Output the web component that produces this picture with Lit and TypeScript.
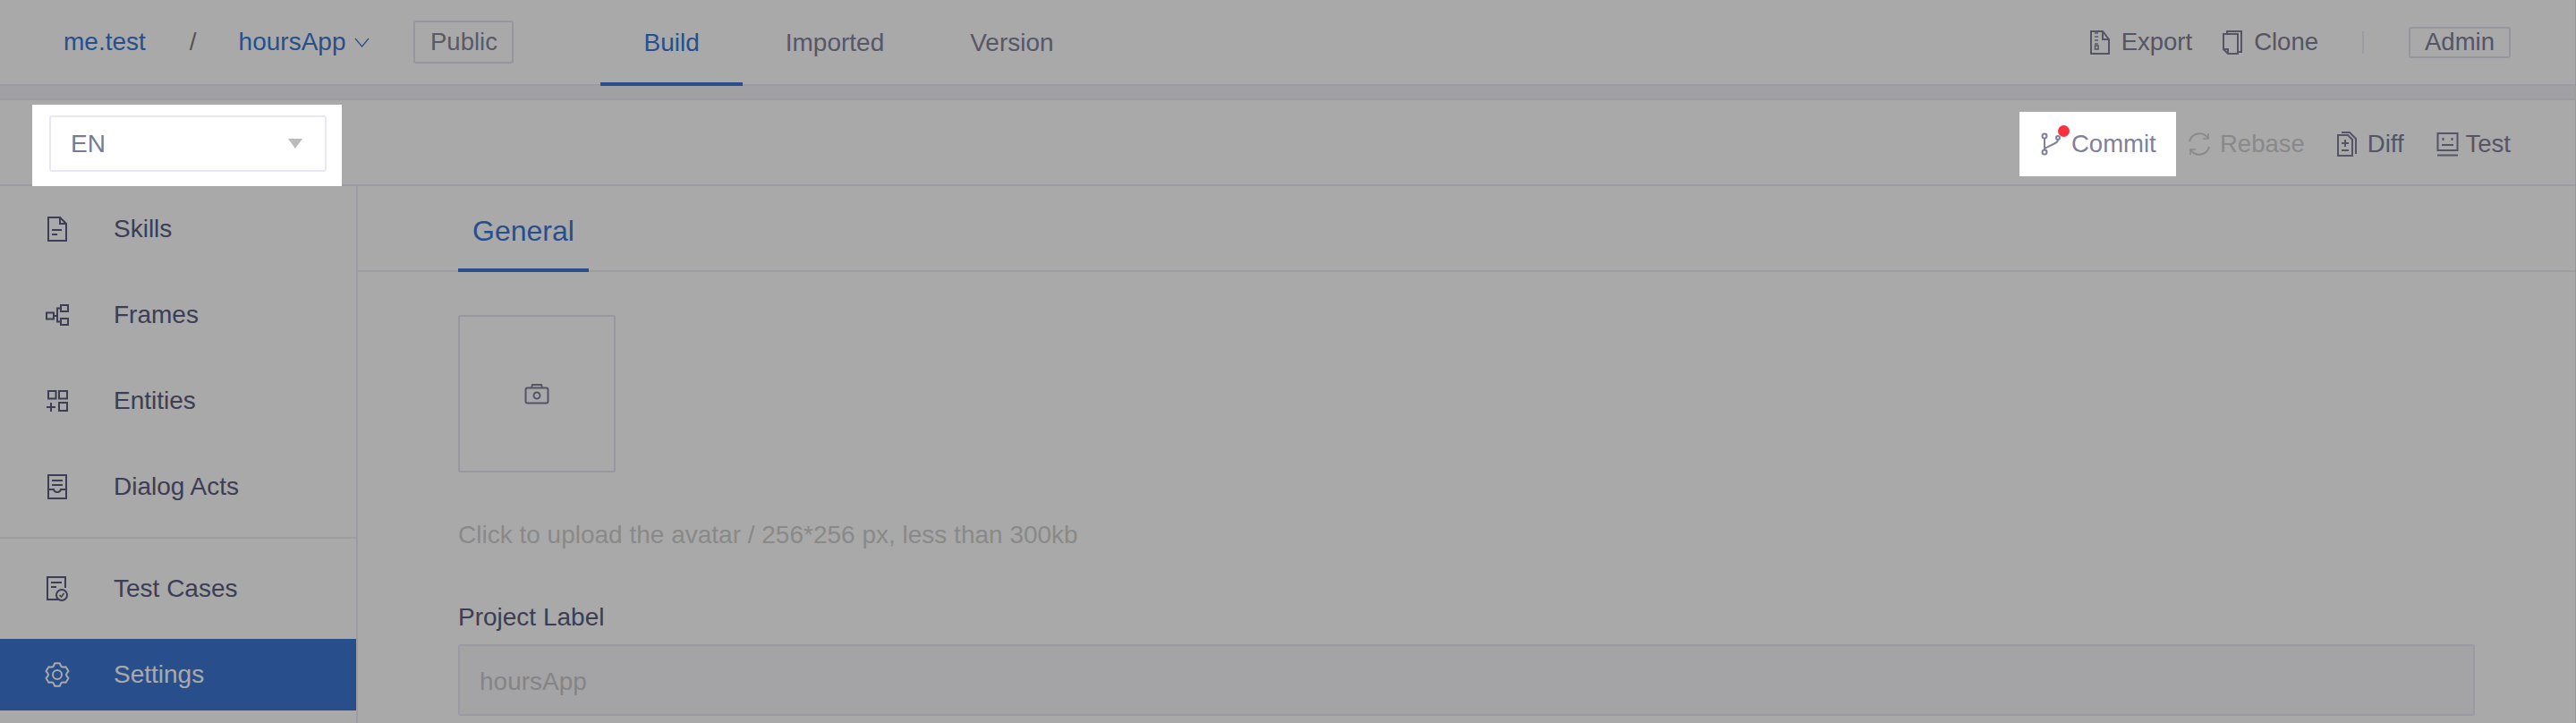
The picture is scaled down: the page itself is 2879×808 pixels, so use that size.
import { LitElement, html, css, svg } from "lit";
import { customElement } from "lit/decorators.js";

const gearPath = (() => {
  const cx = 14, cy = 14, R = 13, r = 10, n = 6;
  const pts: string[] = [];
  for (let i = 0; i < n; i++) {
    const a = (i / n) * Math.PI * 2 - Math.PI / 2;
    const s = Math.PI / n;
    const p = (ang: number, rad: number) => `${(cx + Math.cos(ang) * rad).toFixed(2)} ${(cy + Math.sin(ang) * rad).toFixed(2)}`;
    pts.push(`${i === 0 ? "M" : "L"}${p(a - s * 0.42, R)}`);
    pts.push(`L${p(a + s * 0.42, R)}`);
    pts.push(`Q${p(a + s * 0.75, r + 0.3)} ${p(a + s, r)}`);
    pts.push(`Q${p(a + s * 1.25, r + 0.3)} ${p(a + s * 1.58, R)}`);
  }
  return pts.join(" ") + "Z";
})();

const ic = (w: number, h: number, body: unknown) => html`<svg class="ic" width=${w} height=${h} viewBox="0 0 ${w} ${h}" fill="none" stroke="currentColor" stroke-width="2">${body}</svg>`;

const icons = {
  skills: ic(24, 30, svg`<path d="M2 2h13l7 7v19H2z"/><path d="M15 2v7h7"/><path d="M6 16h11M6 21h6"/>`),
  frames: ic(26, 24, svg`<rect x="1" y="9.500" width="8" height="7"/><rect x="17" y="1" width="8" height="7"/><rect x="17" y="16" width="8" height="7"/><path d="M9 13h4M17 4.500h-4v15h4"/>`),
  entities: ic(26, 26, svg`<rect x="3" y="2" width="8.500" height="8.500"/><rect x="15" y="2" width="9" height="8.500"/><rect x="15" y="15" width="9" height="9"/><path d="M1 20h10M6 15v10"/>`),
  dialog: ic(24, 30, svg`<path d="M2 2h20v26H2z"/><path d="M6 8h12M6 13h12M2 18h6c1 4 7 4 8 0h6"/>`),
  tests: ic(26, 30, svg`<path d="M15 27H2V2h20v12"/><path d="M6 8h12M6 13h6"/><circle cx="18" cy="22" r="6"/><path d="M15.500 22l2 2 3-4" stroke-width="1.500"/>`),
  settings: ic(28, 28, svg`<path d=${gearPath} stroke-linejoin="round"/><circle cx="14" cy="14" r="5"/>`),
  camera: ic(28, 24, svg`<path d="M8 5.500l1-3.500h10l1 3.500"/><rect x="1.500" y="5.500" width="25" height="17" rx="2"/><circle cx="14" cy="14" r="3.500"/>`),
  exportI: ic(24, 28, svg`<path d="M2 2h13l7 9v16H2z"/><path d="M15 2v9h7"/><path d="M8 3v14" stroke-width="4" stroke-dasharray="2 2" opacity=".7"/><rect x="6.500" y="18" width="3.500" height="4" stroke-width="1.500"/>`),
  clone: ic(24, 28, svg`<path d="M6 5V2h16v23h-4"/><path d="M2 5h16v22H7l-5-5z"/><path d="M2 22h5v5"/>`),
  commit: ic(22, 28, svg`<circle cx="4" cy="5" r="2.500"/><circle cx="4" cy="23" r="2.500"/><circle cx="19" cy="7" r="2"/><path d="M4 7.500v13M4 19l12-6c2-1 3-2 3-4"/>`),
  rebase: ic(28, 28, svg`<path d="M3 11A11.500 11.500 0 0 1 24 8M25 17A11.500 11.500 0 0 1 4 20"/><path d="M24 2v6h-6M4 26v-6h6" stroke-width="1.500"/>`),
  diff: ic(24, 30, svg`<path d="M6 2h9l7 7v17"/><path d="M2 5h11l5 5v18H2z"/><path d="M6 14h8M10 10v8M6 22h8"/>`),
  test: ic(26, 30, svg`<rect x="2.500" y="3" width="22" height="19"/><path d="M8.500 8v3M18.500 8v3M7 16h13"/><path d="M2 27.500h23"/>`),
};

@customElement("app-root")
export class AppRoot extends LitElement {
  static styles = css`
    :host {
      display: block;
      position: relative;
      box-sizing: border-box;
      width: 2879px;
      height: 808px;
      overflow: hidden;
      background: #fff;
      border-right: 1px solid #9a9a9a;
      font-family: "Liberation Sans", Arial, sans-serif;
      font-size: 28px;
      color: #80809a;
    }
    * { box-sizing: border-box; }
    .ic { display: block; flex: none; }
    .dim { position: absolute; inset: 0; background: rgba(0, 0, 0, 0.336); z-index: 1; }
    .lift { position: relative; z-index: 2; background: #fff; }

    .top {
      display: flex;
      align-items: center;
      height: 96px;
      padding: 0 72px 0 71px;
      border-bottom: 2px solid #eaeaf4;
    }
    .link { color: #3d78d4; }
    .sep { margin: 0 47px 0 49px; color: #808080; }
    .chev { margin-left: 10px; color: #3d78d4; }
    .public {
      display: flex; align-items: center; justify-content: center;
      width: 112px; height: 48px; margin-left: 49px;
      border: 2px solid #e2e2ee; border-radius: 3px; color: #88889a;
      font-size: 27.5px;
    }
    .tabs { display: flex; align-self: flex-start; margin-left: 97px; }
    .tab {
      display: flex; align-items: center;
      height: 96px; padding: 4px 48px 0;
      border-bottom: 4px solid transparent;
      color: #84849a;
    }
    .tab.on { color: #3d78d4; border-bottom-color: #3d78d4; }
    .top-right { display: flex; align-items: center; margin-left: auto; font-size: 27.5px; }
    .act { display: flex; align-items: center; gap: 12px; color: #80809a; white-space: nowrap; }
    .act + .act { margin-left: 33px; }
    .vline { width: 2px; height: 25px; margin: 0 50px 0 49px; background: #eaeaf4; }
    .admin {
      display: flex; align-items: center; justify-content: center;
      width: 114px; height: 35px;
      border: 2px solid #e2e2ee; border-radius: 3px;
    }
    .band { height: 16px; background: #f3f3f9; border-bottom: 2px solid #eaeaf4; }

    .bar {
      display: flex; align-items: center; justify-content: space-between;
      height: 96px; padding: 4px 72px 0 36px;
      border-bottom: 2px solid #eaeaf4;
    }
    .sel-wrap {
      align-self: flex-end;
      width: 346px; height: 91px;
      margin-bottom: -2px;
      padding: 12px 17px 0 19px;
    }
    .sel {
      display: flex; align-items: center; justify-content: space-between;
      height: 63px; padding: 0 25px 0 22px;
      border: 2px solid #e8e8f5; border-radius: 3px;
      color: #7a7a90;
    }
    .arrow { width: 0; height: 0; border: 8px solid transparent; border-top: 11px solid #bbb; border-bottom: 0; }
    .bar-right { display: flex; align-items: center; font-size: 27.5px; }
    .commit {
      display: flex; align-items: center; gap: 12px;
      width: 175px; height: 72px; padding-left: 24px;
      margin-right: 12px;
    }
    .commit .dot-box { position: relative; }
    .dot { position: absolute; right: -10px; top: -7px; width: 13px; height: 13px; border-radius: 50%; background: #f5333f; }
    .act.off { color: #cfcfcf; gap: 9px; }
    .act.diff { gap: 11px; margin-left: 35px; }
    .act.tst { gap: 8px; margin-left: 35px; }

    .main { display: flex; height: 600px; }
    .side { width: 400px; padding-top: 8px; border-right: 2px solid #eaeaf4; flex: none; }
    .item {
      display: flex; align-items: center;
      height: 80px; margin-bottom: 16px; padding-left: 52px;
      color: #5c5c80;
    }
    .item .slot { display: flex; justify-content: center; width: 24px; margin-right: 51px; }
    .item.on { background: #3d78d4; color: #fff; }
    .divider { height: 2px; margin-bottom: 16px; background: #eeeef4; }

    .content { flex: 1; min-width: 0; }
    .subtabs { display: flex; height: 96px; padding-left: 112px; border-bottom: 2px solid #eeeef4; }
    .subtab {
      display: flex; align-items: center;
      height: 96px; padding: 8px 16px 0;
      font-size: 32px; color: #3d78d4;
      border-bottom: 4px solid #3d78d4;
    }
    .form { padding: 48px 112px 0 112px; }
    .avatar {
      display: flex; align-items: center; justify-content: center;
      width: 176px; height: 176px;
      border: 2px solid #e6e6f0; border-radius: 3px;
      color: #80809a;
    }
    .hint { margin-top: 50px; line-height: 40px; color: #cfcfcf; }
    .label { margin-top: 52px; line-height: 40px; color: #5c5c80; }
    .input {
      display: flex; align-items: center;
      height: 80px; margin-top: 10px; padding: 3px 22px 0;
      background: #f8f8fc; border: 2px solid #e9e9f8; border-radius: 3px;
      color: #c8c8c8;
    }
  `;

  render() {
    return html`
      <div class="top">
        <span class="link">me.test</span>
        <span class="sep">/</span>
        <span class="link">hoursApp</span>
        <svg class="ic chev" width="17" height="11" viewBox="0 0 17 11" fill="none" stroke="currentColor" stroke-width="1.300"><path d="M1 1l7.500 9L16 1"/></svg>
        <span class="public">Public</span>
        <div class="tabs">
          <div class="tab on">Build</div>
          <div class="tab">Imported</div>
          <div class="tab">Version</div>
        </div>
        <div class="top-right">
          <span class="act">${icons.exportI}Export</span>
          <span class="act">${icons.clone}Clone</span>
          <span class="vline"></span>
          <span class="admin">Admin</span>
        </div>
      </div>
      <div class="band"></div>
      <div class="bar">
        <div class="sel-wrap lift">
          <div class="sel">EN<span class="arrow"></span></div>
        </div>
        <div class="bar-right">
          <div class="commit lift">
            <span class="dot-box">${icons.commit}<span class="dot"></span></span>
            Commit
          </div>
          <span class="act off">${icons.rebase}Rebase</span>
          <span class="act diff">${icons.diff}Diff</span>
          <span class="act tst">${icons.test}Test</span>
        </div>
      </div>
      <div class="main">
        <nav class="side">
          <div class="item"><span class="slot">${icons.skills}</span>Skills</div>
          <div class="item"><span class="slot">${icons.frames}</span>Frames</div>
          <div class="item"><span class="slot">${icons.entities}</span>Entities</div>
          <div class="item"><span class="slot">${icons.dialog}</span>Dialog Acts</div>
          <div class="divider"></div>
          <div class="item"><span class="slot">${icons.tests}</span>Test Cases</div>
          <div class="item on"><span class="slot">${icons.settings}</span>Settings</div>
        </nav>
        <section class="content">
          <div class="subtabs"><div class="subtab">General</div></div>
          <div class="form">
            <div class="avatar">${icons.camera}</div>
            <div class="hint">Click to upload the avatar / 256*256 px, less than 300kb</div>
            <div class="label">Project Label</div>
            <div class="input">hoursApp</div>
          </div>
        </section>
      </div>
      <div class="dim"></div>
    `;
  }
}
